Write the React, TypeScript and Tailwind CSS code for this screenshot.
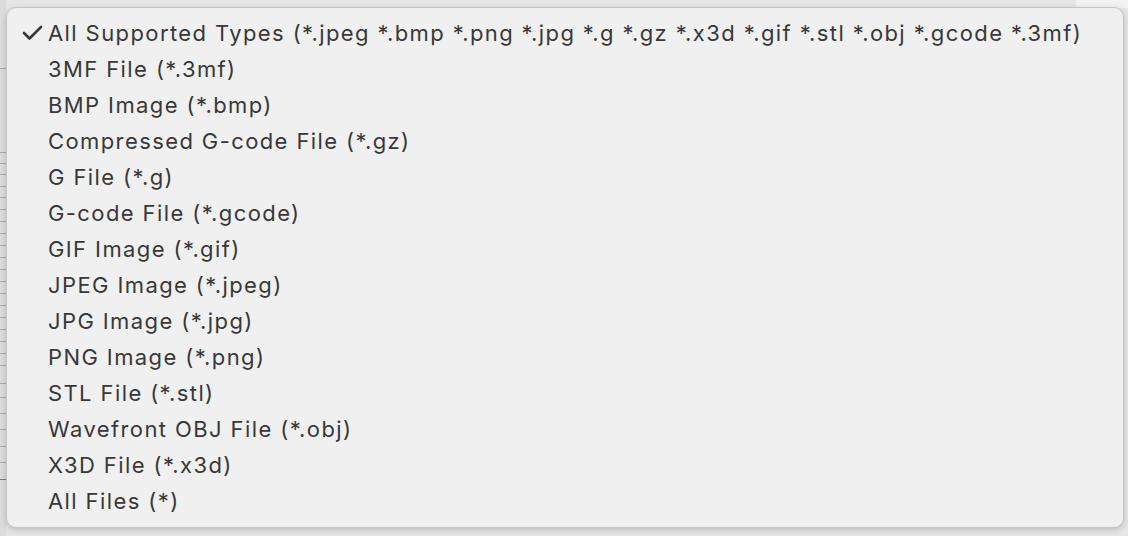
import React from "react";

const items = [
  "All Supported Types (*.jpeg *.bmp *.png *.jpg *.g *.gz *.x3d *.gif *.stl *.obj *.gcode *.3mf)",
  "3MF File (*.3mf)",
  "BMP Image (*.bmp)",
  "Compressed G-code File (*.gz)",
  "G File (*.g)",
  "G-code File (*.gcode)",
  "GIF Image (*.gif)",
  "JPEG Image (*.jpeg)",
  "JPG Image (*.jpg)",
  "PNG Image (*.png)",
  "STL File (*.stl)",
  "Wavefront OBJ File (*.obj)",
  "X3D File (*.x3d)",
  "All Files (*)",
];

const stripLines = [68, 152, 163, 174, 186, 197, 209, 221, 233, 245, 257, 269, 281, 293, 305, 317, 329, 341, 353, 365, 383, 397, 413, 429, 446, 462];

export default function App() {
  return (
    <div className="relative w-[1128px] h-[536px] overflow-hidden bg-[#e6e6e6]" style={{ fontFamily: "Inter, 'Noto Sans', sans-serif" }}>
      <div className="absolute left-0 top-0 w-[6px] h-full bg-[#dcdcdc]">
        {stripLines.map((y) => (
          <div key={y} className="absolute left-0 w-[6px] h-px bg-[#a8a8a8]" style={{ top: y }} />
        ))}
        <div className="absolute left-0 top-[479px] w-[6px] h-px bg-[#3b82f6]" />
      </div>
      <div className="absolute left-[1076px] top-0 w-[52px] h-[8px] bg-[#f2f2f2]" />
      <div className="absolute left-[6px] top-[7px] w-[1118px] h-[521px] rounded-[10px] border border-[#c4c4c4] bg-[#f0f0f0] shadow-[0_2px_6px_rgba(0,0,0,0.18)] pt-[7px]">
        {items.map((t, i) => (
          <div key={i} className="flex h-[36px] items-center text-[22px] tracking-[1.4px] text-[#383838] leading-none">
            <div className="w-[41px] flex justify-end pr-[3px]">
              {i === 0 && (
                <svg width="22" height="16" viewBox="0 0 22 16" className="mr-[1px]">
                  <polyline points="2,8 7.5,13.5 19,2" fill="none" stroke="#383838" strokeWidth="2.6" strokeLinecap="round" strokeLinejoin="round" />
                </svg>
              )}
            </div>
            <span className="whitespace-nowrap">{t}</span>
          </div>
        ))}
      </div>
    </div>
  );
}
